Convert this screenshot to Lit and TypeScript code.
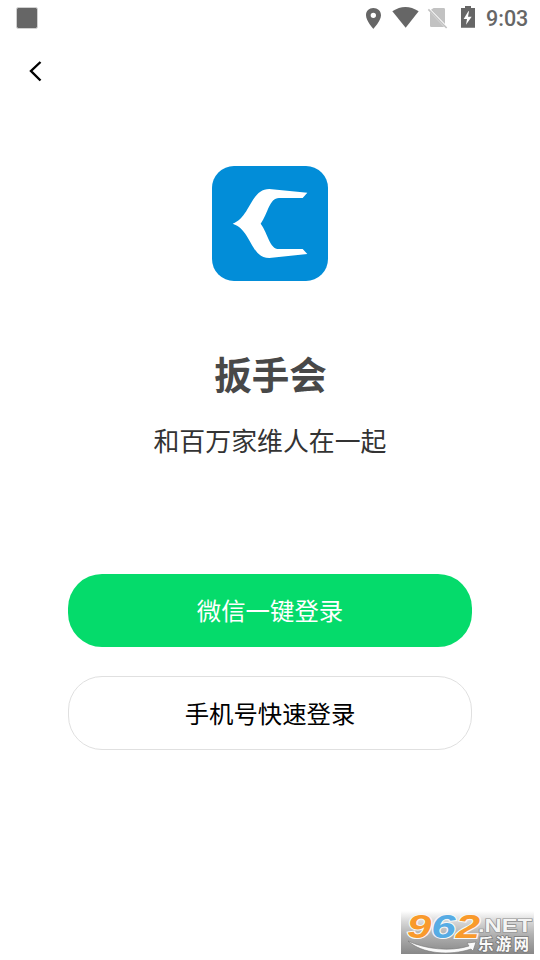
import { LitElement, html, css } from "lit";
import { customElement } from "lit/decorators.js";

@customElement("status-bar")
class StatusBar extends LitElement {
  static styles = css`
    :host {
      display: flex;
      align-items: center;
      justify-content: space-between;
      height: 36px;
      padding: 0 12px 0 16px;
    }
    .app {
      width: 22px;
      height: 22px;
      box-sizing: border-box;
      border: 1px solid #d0d0d0;
      background: #666;
      background-clip: padding-box;
      border-radius: 2px;
    }
    .right {
      display: flex;
      align-items: center;
      height: 36px;
    }
    .icons {
      display: block;
      width: 120px;
      height: 36px;
    }
    .time {
      width: 42px;
      margin-left: 6px;
      padding-top: 2px;
      font: 500 21.5px/38px Roboto, sans-serif;
      color: #666;
      white-space: nowrap;
    }
  `;
  render() {
    return html`
      <div class="app"></div>
      <div class="right">
        <svg class="icons" viewBox="30 0 360 108">
          <path fill="#666" fill-rule="evenodd" d="M70 24C57 24 48 33 48 46C48 63 70 87 70 87S93 63 93 46C93 33 83 24 70 24ZM70 38a8 8 0 1 1 0 16a8 8 0 1 1 0-16Z" />
          <path fill="#666" d="M127 34Q166 8 206 34L167 83Z" />
          <path fill="#c2c2c2" d="M251 24H281Q285 24 285 28V72L243 29ZM240 37L282 80Q281 81 280 81H244Q240 81 240 77Z" />
          <path stroke="#c2c2c2" stroke-width="5" d="M235 28L290 84" />
          <path fill="#666" fill-rule="evenodd" d="M345 18H363V24H375V83H333V24H345ZM355 34L341 57H351L348 74L365 50H354L357 34Z" />
        </svg>
        <div class="time">9:03</div>
      </div>
    `;
  }
}

@customElement("site-badge")
class SiteBadge extends LitElement {
  static styles = css`
    :host {
      display: block;
      width: 133px;
      height: 43px;
      background: linear-gradient(#fff 0%, #d8d8d8 24%, #b1b1b1 55%, #888 100%);
    }
    svg {
      display: block;
      width: 133px;
      height: 43px;
      overflow: visible;
    }
    .num {
      font: italic bold 33px "Liberation Sans", sans-serif;
      paint-order: stroke;
      stroke: #f7f7f7;
      stroke-width: 2px;
    }
    .net {
      font: bold 18px "Liberation Sans", sans-serif;
      fill: #f4f4f4;
      paint-order: stroke;
      stroke: #8b8b8b;
      stroke-width: 1.2px;
    }
    .cn {
      font: bold 15.5px "Noto Sans CJK SC", sans-serif;
      fill: #fafafa;
      paint-order: stroke;
      stroke: #777;
      stroke-width: 1.5px;
    }
    .orange {
      fill: #f99a2c;
    }
    .blue {
      fill: #57ace4;
    }
  `;
  render() {
    return html`
      <svg viewBox="0 0 133 43">
        <path fill="#fafafa" stroke="#777" stroke-width=".6" d="M7 30C24 38 49 41 68 35L66 32L75 31L72 40L70 38C49 45 21 43 7 30Z" />
        <text class="num" x="6" y="26.5" textLength="73" lengthAdjust="spacingAndGlyphs"><tspan class="orange">9</tspan><tspan class="blue">6</tspan><tspan class="orange">2</tspan></text>
        <text class="net" x="77" y="21" textLength="54" lengthAdjust="spacingAndGlyphs">.NET</text>
        <text class="cn" x="77" y="38.5" textLength="51">乐游网</text>
      </svg>
    `;
  }
}

@customElement("app-root")
class AppRoot extends LitElement {
  static styles = css`
    :host {
      display: flex;
      flex-direction: column;
      position: relative;
      height: 960px;
      background: #fff;
      overflow: hidden;
      font-family: "Noto Sans CJK SC", sans-serif;
    }
    .nav {
      height: 70px;
      padding-left: 20px;
    }
    .back {
      display: block;
      width: 30px;
      height: 70px;
    }
    main {
      display: flex;
      flex-direction: column;
      align-items: center;
      padding-top: 60px;
    }
    .logo {
      display: block;
      width: 116px;
      height: 115px;
      border-radius: 22px;
      background: #028dd8;
    }
    h1 {
      margin: 64px 0 0;
      padding-left: 1px;
      font-size: 37.5px;
      line-height: 56px;
      font-weight: 700;
      color: #484848;
    }
    p {
      margin: 19px 0 0;
      font-size: 25.9px;
      line-height: 40px;
      color: #333;
    }
    button {
      box-sizing: border-box;
      width: 404px;
      height: 74px;
      padding: 0;
      border: 1px solid #e0e0e0;
      border-radius: 34px;
      background: #fff;
      font: 400 24.4px/36px "Noto Sans CJK SC", sans-serif;
      color: #000;
    }
    .wechat {
      height: 73px;
      margin: 114px 0 29px;
      padding-bottom: 2px;
      border: 0;
      background: #05db6b;
      color: #fff;
    }
    site-badge {
      position: absolute;
      left: 401px;
      top: 911px;
    }
  `;
  render() {
    return html`
      <status-bar></status-bar>
      <div class="nav">
        <svg class="back" viewBox="0 0 30 70">
          <path d="M20.5 26L11 35L20.5 44.5" fill="none" stroke="#000" stroke-width="2.4" />
        </svg>
      </div>
      <main>
        <svg class="logo" viewBox="30 30 348 345">
          <path fill="#fff" d="M92 203C145 184 145 99 202 99L316 110L302 126H231C202 126 198 173 176 203C199 234 202 279 231 279H302L316 294L202 306C145 306 149 222 92 203Z" />
        </svg>
        <h1>扳手会</h1>
        <p>和百万家维人在一起</p>
        <button class="wechat">微信一键登录</button>
        <button>手机号快速登录</button>
      </main>
      <site-badge></site-badge>
    `;
  }
}
